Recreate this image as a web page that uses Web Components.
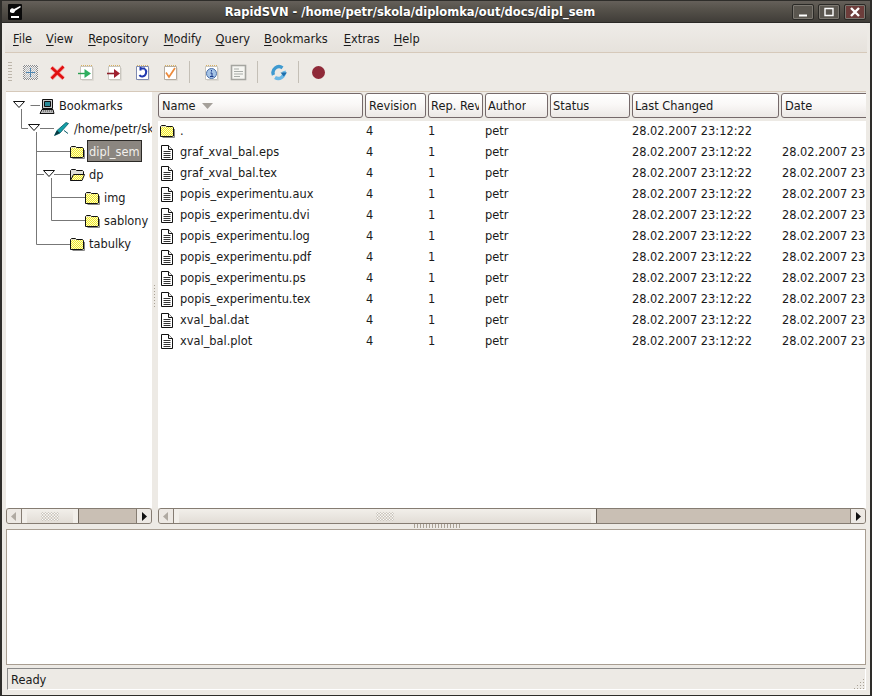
<!DOCTYPE html>
<html><head><meta charset="utf-8"><style>
html,body{margin:0;padding:0;background:#2e2d2a}
body{font:11.4px "DejaVu Sans",sans-serif;color:#1a1a1a}
</style></head><body>
<rs-window>
  <rs-titlebar slot="title">RapidSVN - /home/petr/skola/diplomka/out/docs/dipl_sem</rs-titlebar>
  <rs-menubar></rs-menubar>
  <rs-toolbar></rs-toolbar>
  <rs-main>
    <rs-tree></rs-tree>
    <rs-list></rs-list>
  </rs-main>
  <rs-log></rs-log>
  <rs-status>Ready</rs-status>
</rs-window>
<script>
const dither=(id,a,b)=>`<pattern id="${id}" width="2" height="2" patternUnits="userSpaceOnUse"><rect width="2" height="2" fill="${a}"/><rect width="1" height="1" fill="${b}"/><rect x="1" y="1" width="1" height="1" fill="${b}"/></pattern>`;
const page=(inner,border='#c9c6bf')=>`<path d="M2.500 2.500h12v13h-12z" fill="#fff" stroke="${border}"/><path d="M3 1.500h11" stroke="#d8b060" stroke-dasharray="1 1"/><path d="M15.500 4v12.500H4" fill="none" stroke="#dedbd5"/>${inner}`;
const ICONS={
 add:`<defs>${dither('g','#8a8a8a','#f4f4f4')}</defs><rect x="1" y="1" width="15" height="15" fill="url(#g)"/><rect x="3" y="3" width="11" height="11" fill="#e6e8ea" opacity=".55"/><path d="M8.500 4v9M4 8.500h9" stroke="#4f86b0"/>`,
 del:`<path d="M2.500 3.500l12 11M14.500 2.500l-12 12" stroke="#f6a8a8" stroke-width="4.200"/><path d="M2.500 3.500l12 11M14.500 2.500l-12 12" stroke="#e01010" stroke-width="2.600"/>`,
 upd:page(`<path d="M0 9.500h7" stroke="#2aa050" stroke-width="1.400"/><path d="M6.500 5v9l6.500-4.500z" fill="#30b060"/>`),
 com:page(`<path d="M1 9.500h8" stroke="#8e1f2a" stroke-width="1.600"/><path d="M8 5v9l6-4.500z" fill="#a02030"/>`),
 rev:page(`<path d="M6 4.500h5M6.500 3v3.500M11 5c2 2 1.500 7-2.500 7.500C7 12.700 6 12 5.500 11" fill="none" stroke="#2038b0" stroke-width="2"/>`,'#7f8ab0'),
 res:page(`<path d="M4 8.500l3 4.500 6-9" fill="none" stroke="#ec8a3a" stroke-width="1.700"/>`,'#b5aca0'),
 inf:page(`<circle cx="8.500" cy="9.500" r="5" fill="#a6c4e6" stroke="#4b6fa8"/><path d="M8.500 6v1.500M7.500 9h1.500v3M7 12.500h3.500" stroke="#1c3a8a" fill="none"/>`),
 log:`<path d="M1.500 1.500h14v14h-14z" fill="#f6f6f2" stroke="#a5a5a0" stroke-width="1.600"/><path d="M4 5h5M4 7.500h9M4 10h9M4 12.500h6" stroke="#a8aca8"/>`,
 ref:`<path d="M3.500 11A6 6 0 0 1 12.500 3.800" fill="none" stroke="#3f9ad0" stroke-width="3.400"/><path d="M14 7A6 6 0 0 1 5 13.500" fill="none" stroke="#6ab8e6" stroke-width="3.400"/><path d="M10.500 8.500h6.500l-3.200 4z" fill="#1c6eac"/>`,
 stop:`<circle cx="8.500" cy="8.500" r="6.500" fill="#8f2a38"/>`,
 book:`<path d="M3.500 1.500h10v9h-10z" fill="#c9c9c9" stroke="#111"/><path d="M5.500 3.500h6v5h-6z" fill="#2a8a98" stroke="#111"/><path d="M1 15.500l2-4h11l1 4z" fill="#bbb" stroke="#111"/><path d="M4 13h9" stroke="#444" stroke-dasharray="1 1"/>`,
 wc:`<path d="M1.500 14.500l2.500-5L13 1.500l2.500 1L7 12z" fill="#14a0a8" stroke="#0a5a66" stroke-width=".8"/><path d="M1.500 14.500l2.500-5 3 2.500z" fill="#083840"/><path d="M11 9.500l4 3" stroke="#0a5a66"/>`,
 folder:`<defs>${dither('y','#f0e828','#fdfdc8')}</defs><path d="M1.500 13.500v-10l1-1h4l1 1h6l1 1v8.500l-1 .5z" fill="url(#y)" stroke="#111"/><path d="M2 3.500h5" stroke="#e8e4c8"/><path d="M15.500 6v8.500h-12" fill="none" stroke="#888"/>`,
 open:`<defs>${dither('y','#f0e828','#fdfdc8')}</defs><path d="M1.500 13.500v-10l1-1h4l1 1h6l1 1v3" fill="#e0e0d8" stroke="#111"/><path d="M1.500 13.500l3-6h11l-2.500 6z" fill="url(#y)" stroke="#111"/>`,
 doc:`<path d="M2.500 1.500h7l4 4v10h-11z" fill="#fff" stroke="#111"/><path d="M9.500 1.500v4h4" fill="#eee" stroke="#111"/><path d="M4.500 7.500h7M4.500 9.500h7M4.500 11.500h7M4.500 13.500h7" stroke="#333"/>`
};
class Base extends HTMLElement{
  html(s){(this.shadowRoot||this.attachShadow({mode:'open'})).innerHTML=s}
}
class RsIcon extends Base{connectedCallback(){
  const n=this.getAttribute('name');
  this.html(`<style>:host{display:block;width:17px;height:17px;flex:none}svg{display:block}</style><svg width="17" height="17" viewBox="0 0 17 17">${ICONS[n]}</svg>`)}}
class RsWindow extends Base{connectedCallback(){this.html(`<style>
:host{display:flex;flex-direction:column;box-sizing:border-box;width:872px;height:696px;overflow:hidden;background:#edeae5;border-left:2px solid #2e2d2a;border-right:2px solid #2e2d2a;border-bottom:1px solid #2e2d2a;position:relative}
</style><slot name="title"></slot><slot></slot>`)}}
class RsTitlebar extends Base{connectedCallback(){this.html(`<style>
:host{display:flex;align-items:center;flex:none;height:23px;margin:0 -2px;padding:0 6px 0 8px;box-sizing:border-box;background:linear-gradient(#65605a 0,#57534c 35%,#403d38 100%);border-top:1px solid #2e2d2a;border-bottom:1px solid #2a2926;color:#fff;font:bold 11.5px "DejaVu Sans",sans-serif}
.t{flex:1;text-align:center;padding-left:10px;white-space:nowrap;text-shadow:0 1px 1px #222}
.b{width:22px;height:16px;box-sizing:border-box;border:1px solid #2a2926;box-shadow:inset 0 0 0 1px #7c7871;border-radius:2px;margin-left:4px;display:flex;align-items:center;justify-content:center;background:#5a564f}
.b.c{background:#6d3d3b}
.app{width:14px;height:16px}
</style>
<svg class="app" viewBox="0 0 14 16"><rect y="0" width="14" height="16" fill="#0a0a0a" rx="1"/><path d="M2 6c1-2 3-2 4-1l6-3 1 1-6 4c0 2-3 3-5 1zM3 12h8v2H3z" fill="#fff"/></svg>
<span class="t"><slot></slot></span>
<span class="b"><svg width="12" height="10"><path d="M2 7.500h8v2H2z" fill="#fff"/></svg></span>
<span class="b"><svg width="12" height="12"><path d="M2 2.500h8v7H2z" fill="none" stroke="#fff" stroke-width="1.400"/></svg></span>
<span class="b c"><svg width="12" height="12"><path d="M2 2l8 8M10 2l-8 8" stroke="#fff" stroke-width="2.400"/></svg></span>`)}}
class RsMenubar extends Base{connectedCallback(){
 const m=[['File',0],['View',0],['Repository',1],['Modify',1],['Query',0],['Bookmarks',0],['Extras',2],['Help',0]];
 this.html(`<style>
:host{display:flex;flex:none;height:30px;box-sizing:border-box;padding:4px 3px 0 1px;margin:0 3px;align-items:center;background:linear-gradient(#efece8,#e6e2dc);border-bottom:1px solid #d6c9ba}
span{padding:0 7px;white-space:nowrap;line-height:15px}
u{text-underline-offset:2px}
</style>${m.map(([x,g])=>`<span style="margin-left:${g}px"><u>${x[0]}</u>${x.slice(1)}</span>`).join('')}`)}}
class RsToolbar extends Base{connectedCallback(){
 this.html(`<style>
:host{display:flex;flex:none;height:38px;margin:0 3px;box-sizing:border-box;align-items:center;padding:0 0 0 3px}
.grip{width:4px;height:22px;background:radial-gradient(circle,#bdb6ab 0 .7px,transparent .8px) 0 0/2px 3px;flex:none}
.s{width:1px;height:22px;background:#c4bfb6;flex:none}
.i{flex:none}
</style><div class="grip"></div>
<div class="i" style="margin-left:10px"><rs-icon name="add"></rs-icon></div>
<div class="i" style="margin-left:10px"><rs-icon name="del"></rs-icon></div>
<div class="i" style="margin-left:12px"><rs-icon name="upd"></rs-icon></div>
<div class="i" style="margin-left:11px"><rs-icon name="com"></rs-icon></div>
<div class="i" style="margin-left:11px"><rs-icon name="rev"></rs-icon></div>
<div class="i" style="margin-left:11px"><rs-icon name="res"></rs-icon></div>
<div class="s" style="margin-left:10px"></div>
<div class="i" style="margin-left:13px"><rs-icon name="inf"></rs-icon></div>
<div class="i" style="margin-left:10px"><rs-icon name="log"></rs-icon></div>
<div class="s" style="margin-left:10px"></div>
<div class="i" style="margin-left:12px"><rs-icon name="ref"></rs-icon></div>
<div class="s" style="margin-left:11px"></div>
<div class="i" style="margin-left:11px"><rs-icon name="stop"></rs-icon></div>`)}}
class RsMain extends Base{connectedCallback(){this.html(`<style>
:host{display:flex;flex:none;height:433px;box-sizing:border-box;margin:0 4px 0 4px;gap:6px;border-top:1px solid #d6c9ba;position:relative}
.grip{position:absolute;left:147px;top:192px;width:3px;height:24px;background:radial-gradient(circle,#a9a296 0 .7px,transparent .8px) 0 0/3px 3px}
</style><slot></slot><div class="grip"></div>`)}}
class RsScrollbar extends Base{connectedCallback(){
 const a=this.getAttribute('thumb');
 this.html(`<style>
:host{display:flex;flex:none;height:16px;box-sizing:border-box;border:1px solid #857c72;border-radius:3px;background:#c9bfb4;overflow:hidden;margin-top:auto}
.a{flex:none;width:14px;display:flex;align-items:center;justify-content:center;background:#ede9e4}
.a.l{border-right:1px solid #857c72}.a.r{border-left:1px solid #857c72}
.th{flex:none;width:${a}px;box-sizing:border-box;border-right:1px solid #6d655c;background:linear-gradient(#f2efea,#e2ddd6);box-shadow:inset 5px 0 0 #f2efea, inset -5px 0 0 #f2efea;display:flex;align-items:center;justify-content:center}
.g{width:18px;height:9px;background:radial-gradient(circle,#fff 0 .8px,#cfcac2 .9px 1px,transparent 1.1px) 0 0/3px 3px}
.tr{flex:1}
</style><div class="a l"><svg width="7" height="9"><path d="M5 0v9L0 4.500z" fill="#b0aaa2"/></svg></div><div class="th"><div class="g"></div></div><div class="tr"></div><div class="a r"><svg width="7" height="9"><path d="M1 0v9l5-4.500z" fill="#111"/></svg></div>`)}}
class RsTree extends Base{connectedCallback(){
 const r=[[33,'book','Bookmarks',2],[47,'wc','/home/petr/skola',3],[63,'folder','dipl_sem',1,1],[63,'open','dp',2],[78,'folder','img',2],[78,'folder','sablony',2],[63,'folder','tabulky',2]];
 const tri=(x,y)=>`<path d="M${x}.5 ${y}.5h11l-5.500 6z" fill="#fff" stroke="#111"/>`;
 this.html(`<style>
:host{display:flex;flex-direction:column;flex:none;width:146px;height:100%}
.v{flex:1;min-height:0;background:#fff;position:relative;overflow:hidden;padding-top:3px;box-sizing:border-box}
.row{display:flex;align-items:center;height:23px;white-space:nowrap;position:relative}
.lab{line-height:21px;padding:0 1px}
.sel{background:#8b8680;color:#f2f0ec;outline:1px solid #2b2926;outline-offset:-1px;padding:0 2px;height:22px;line-height:24px;margin-top:-3px}
svg.lines{position:absolute;left:0;top:0}
</style><div class="v">
<svg class="lines" width="146" height="170">
<path d="M24.500 13.500H34M15.500 17V36.500H22M34 36.500H48M30.500 40V152.500H64M30.500 59.500H64M30.500 82.500H38M48 82.500H64M45.500 86V128.500H79M45.500 105.500H79" stroke="#777" fill="none"/>
${tri(7,9)}${tri(22,32)}${tri(37,78)}</svg>
${r.map(x=>`<div class="row" style="padding-left:${x[0]}px"><rs-icon name="${x[1]}"></rs-icon><span class="lab ${x[4]?'sel':''}" style="margin-left:${x[3]}px">${x[2]}</span></div>`).join('')}
</div><rs-scrollbar thumb="57"></rs-scrollbar>`)}}
class RsList extends Base{connectedCallback(){
 const cols=[['Name',207],['Revision',63],['Rep. Rev',57],['Author',65],['Status',82],['Last Changed',149],['Date',100]];
 const f=['graf_xval_bal.eps','graf_xval_bal.tex','popis_experimentu.aux','popis_experimentu.dvi','popis_experimentu.log','popis_experimentu.pdf','popis_experimentu.ps','popis_experimentu.tex','xval_bal.dat','xval_bal.plot'];
 const d='28.02.2007 23:12:22';
 const tpl=cols.map(c=>c[1]+'px').join(' ');
 const row=(ic,n,last)=>`<div class="r"><div class="n"><rs-icon name="${ic}"></rs-icon><span>${n}</span></div><div>4</div><div>1</div><div>petr</div><div></div><div>${d}</div><div>${last}</div></div>`;
 this.html(`<style>
:host{display:flex;flex-direction:column;flex:1;min-width:0;height:100%}
.v{flex:1;min-height:0;background:#fff;overflow:hidden}
.h,.r{display:grid;grid-template-columns:${tpl};width:723px}
.h{height:29px;padding-top:1px;box-sizing:border-box;background:#edeae5}
.c{box-sizing:border-box;margin-right:2px;height:25px;border:1px solid #75696a;border-radius:3px;background:linear-gradient(#fff 0,#faf8f7 45%,#ece8e5 100%);padding:0 3px;line-height:22px;white-space:nowrap;overflow:hidden;display:flex;align-items:center;gap:6px}
.c:nth-child(n+3):nth-child(-n+6){padding-left:2px}
.c svg{flex:none}
.c i{font-style:normal;overflow:hidden}
.r{height:21px;line-height:21px;white-space:nowrap}
.r>div{overflow:hidden;padding-left:1px}
.r>div:nth-child(3),.r>div:nth-child(4),.r>div:nth-child(6){padding-left:0}
.n{display:flex;align-items:center;gap:4px}
</style><div class="v"><div class="h">${cols.map((c,i)=>`<div class="c"><i>${c[0]}</i>${i==0?'<svg width="11" height="6"><path d="M0 0h11L5.500 6z" fill="#a5a09a"/></svg>':''}</div>`).join('')}</div>
<div class="rows">${row('folder','.','')}${f.map(n=>row('doc',n,d)).join('')}</div></div><rs-scrollbar thumb="423"></rs-scrollbar>`)}}
class RsLog extends Base{connectedCallback(){this.html(`<style>
:host{display:block;flex:none;margin:0 4px 0 4px}
.sash{height:5px;display:flex;justify-content:center}
.sash i{display:block;width:47px;height:4px;background:radial-gradient(circle,#a9a296 0 .7px,transparent .8px) 0 0/3px 2px}
.b{height:136px;box-sizing:border-box;background:#fff;border:1px solid #a89e92}
</style><div class="sash"><i></i></div><div class="b"></div>`)}}
class RsStatus extends Base{connectedCallback(){this.html(`<style>
:host{display:block;flex:none;margin:3px 4px 0 5px}
.s{height:22px;box-sizing:border-box;border:1px solid;border-color:#8a8a8a #fff #fff #8a8a8a;display:flex;align-items:center;padding:2px 0 0 3px;position:relative}
.g{position:absolute;right:1px;bottom:0;width:11px;height:11px;background:radial-gradient(circle,#a9a296 0 .8px,transparent .9px) 0 0/3px 3px;clip-path:polygon(100% 0,100% 100%,0 100%)}
</style><div class="s"><slot></slot><div class="g"></div></div>`)}}
for(const [n,c] of Object.entries({'rs-icon':RsIcon,'rs-window':RsWindow,'rs-titlebar':RsTitlebar,'rs-menubar':RsMenubar,'rs-toolbar':RsToolbar,'rs-main':RsMain,'rs-scrollbar':RsScrollbar,'rs-tree':RsTree,'rs-list':RsList,'rs-log':RsLog,'rs-status':RsStatus}))customElements.define(n,c);
</script></body></html>
